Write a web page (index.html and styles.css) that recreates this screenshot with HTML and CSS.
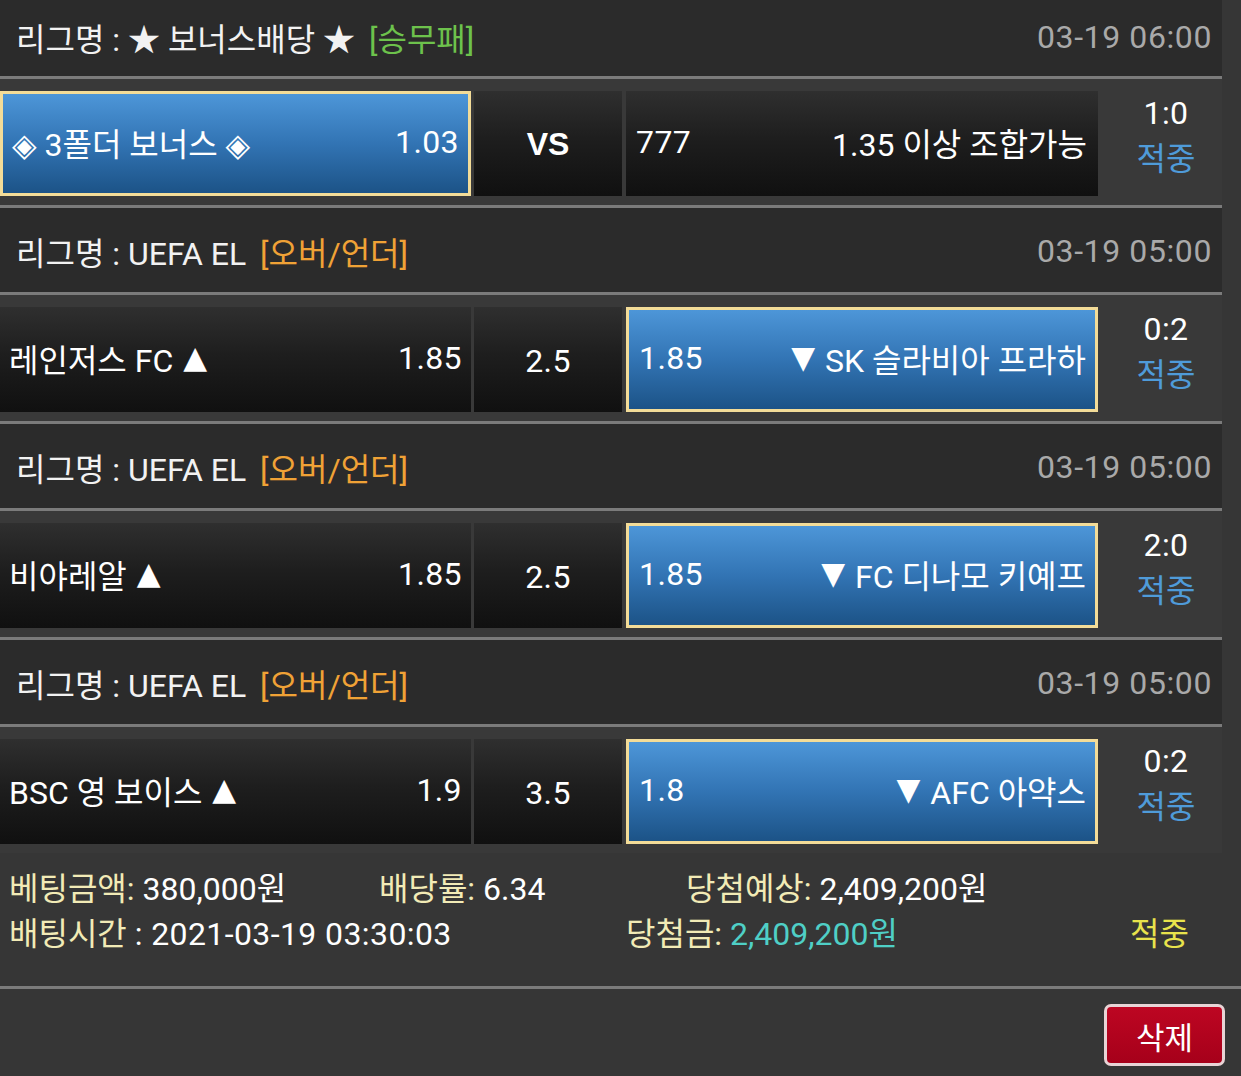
FILE: index.html
```html
<!DOCTYPE html>
<html lang="ko">
<head>
<meta charset="utf-8">
<title>베팅내역</title>
<link rel="stylesheet" href="styles.css">
</head>
<body>
<div class="list">
  <div class="ghead first">
    <span class="league">리그명 : ★ 보너스배당 ★ <span class="tag green">[승무패]</span></span>
    <span class="date">03-19 06:00</span>
  </div>
  <div class="grow">
    <div class="cell c1 sel"><span class="name">◈ 3폴더 보너스 ◈</span><span class="num">1.03</span></div>
    <div class="cell c2 vs">VS</div>
    <div class="cell c3"><span class="num">777</span><span>1.35 이상 조합가능</span></div>
    <div class="score"><span class="num">1:0</span><span class="hit">적중</span></div>
  </div>

  <div class="ghead">
    <span class="league">리그명 : UEFA EL <span class="tag orange">[오버/언더]</span></span>
    <span class="date">03-19 05:00</span>
  </div>
  <div class="grow">
    <div class="cell c1"><span>레인저스 FC <span class="tri">▲</span></span><span class="num">1.85</span></div>
    <div class="cell c2 num">2.5</div>
    <div class="cell c3 sel"><span class="num">1.85</span><span><span class="tri">▼</span> SK 슬라비아 프라하</span></div>
    <div class="score"><span class="num">0:2</span><span class="hit">적중</span></div>
  </div>

  <div class="ghead">
    <span class="league">리그명 : UEFA EL <span class="tag orange">[오버/언더]</span></span>
    <span class="date">03-19 05:00</span>
  </div>
  <div class="grow">
    <div class="cell c1"><span>비야레알 <span class="tri">▲</span></span><span class="num">1.85</span></div>
    <div class="cell c2 num">2.5</div>
    <div class="cell c3 sel"><span class="num">1.85</span><span><span class="tri">▼</span> FC 디나모 키예프</span></div>
    <div class="score"><span class="num">2:0</span><span class="hit">적중</span></div>
  </div>

  <div class="ghead">
    <span class="league">리그명 : UEFA EL <span class="tag orange">[오버/언더]</span></span>
    <span class="date">03-19 05:00</span>
  </div>
  <div class="grow last">
    <div class="cell c1"><span>BSC 영 보이스 <span class="tri">▲</span></span><span class="num">1.9</span></div>
    <div class="cell c2 num">3.5</div>
    <div class="cell c3 sel"><span class="num">1.8</span><span><span class="tri">▼</span> AFC 아약스</span></div>
    <div class="score"><span class="num">0:2</span><span class="hit">적중</span></div>
  </div>
</div>

<div class="summary">
  <div class="srow r1">
    <span><span class="lbl">베팅금액:</span> 380,000원</span>
    <span><span class="lbl">배당률:</span> 6.34</span>
    <span><span class="lbl">당첨예상:</span> 2,409,200원</span>
  </div>
  <div class="srow r2">
    <span><span class="lbl">배팅시간</span> <span class="num">: 2021-03-19 03:30:03</span></span>
    <span><span class="lbl">당첨금:</span> <span class="won">2,409,200원</span></span>
    <span class="result">적중</span>
  </div>
</div>
<div class="actions">
  <button class="del" type="button">삭제</button>
</div>
</body>
</html>
```

FILE: styles.css
```css
html, body {
  margin: 0;
  padding: 0;
}
body {
  width: 1241px;
  min-height: 1076px;
  background: #363636;
  color: #ffffff;
  font-family: Roboto, "Noto Sans CJK KR", "DejaVu Sans", sans-serif;
  font-size: 32px;
}
.list {
  width: 1222px;
  background: #393939;
}
.ghead {
  height: 87px;
  box-sizing: border-box;
  padding: 2px 10px 0 16px;
  background: #2b2b2b;
  display: flex;
  align-items: center;
  justify-content: space-between;
  border-bottom: 3px solid #7b7b7b;
  color: #f2f2f2;
}
.ghead.first {
  height: 79px;
  padding-top: 0;
  padding-bottom: 3px;
}
.tag { margin-left: 6px; }
.tag.green { color: #6dc24c; }
.tag.orange { color: #f0a236; }
.date { color: #a9a9a9; letter-spacing: 0.6px; }
.num { letter-spacing: 0.4px; }
.tri {
  font-family: "DejaVu Sans", sans-serif;
  font-size: 31px;
  position: relative;
  top: -4px;
  margin: 0 2px;
}
.grow {
  display: flex;
  padding: 12px 0 9px;
  border-bottom: 3px solid #7b7b7b;
}
.grow.last { border-bottom: none; }
.cell {
  height: 105px;
  box-sizing: border-box;
  display: flex;
  align-items: center;
  justify-content: space-between;
  padding: 0 9px 4px;
  background: linear-gradient(to bottom, #2f2f2f 0%, #1e1e1e 45%, #101010 100%);
  color: #ffffff;
}
.c1 { width: 471px; margin-right: 3px; }
.c2 { width: 148px; margin-right: 4px; justify-content: center; padding: 2px 0 0; }
.c3 { width: 472px; padding: 0 11px 4px 10px; }
.vs { font-family: "Liberation Sans", Arial, sans-serif; font-weight: bold; font-size: 32px; }
.cell.sel {
  border: 3px solid #f3dc98;
  background: linear-gradient(to bottom, #4d96d8 0%, #3274b4 50%, #1c5387 100%);
  padding: 0 9px 4px 9px;
}
.c3.sel { padding: 0 9px 4px 10px; }
.score {
  width: 124px;
  height: 105px;
  box-sizing: border-box;
  padding: 0 0 16px 12px;
  display: flex;
  flex-direction: column;
  align-items: center;
  justify-content: center;
  line-height: 46px;
}
.hit { color: #4f9bd9; }
.summary {
  padding: 14px 0 29px 9px;
  border-bottom: 3px solid #7b7b7b;
  line-height: 45px;
}
.srow { display: grid; }
.srow.r1 { grid-template-columns: 370px 307px auto; }
.srow.r2 { grid-template-columns: 617px 504px auto; }
.lbl { color: #f2ebb6; }
.won { color: #4fcfc6; }
.result { color: #e8e34c; }
.actions {
  display: flex;
  justify-content: flex-end;
  padding: 15px 16px 0 0;
}
.del {
  width: 121px;
  height: 62px;
  box-sizing: border-box;
  border: 3px solid #e8d4d6;
  border-radius: 7px;
  background: linear-gradient(to bottom, #bd0622, #a6001a);
  color: #ffffff;
  font-family: Roboto, "Noto Sans CJK KR", sans-serif;
  font-size: 31px;
  padding: 0;
}
```
